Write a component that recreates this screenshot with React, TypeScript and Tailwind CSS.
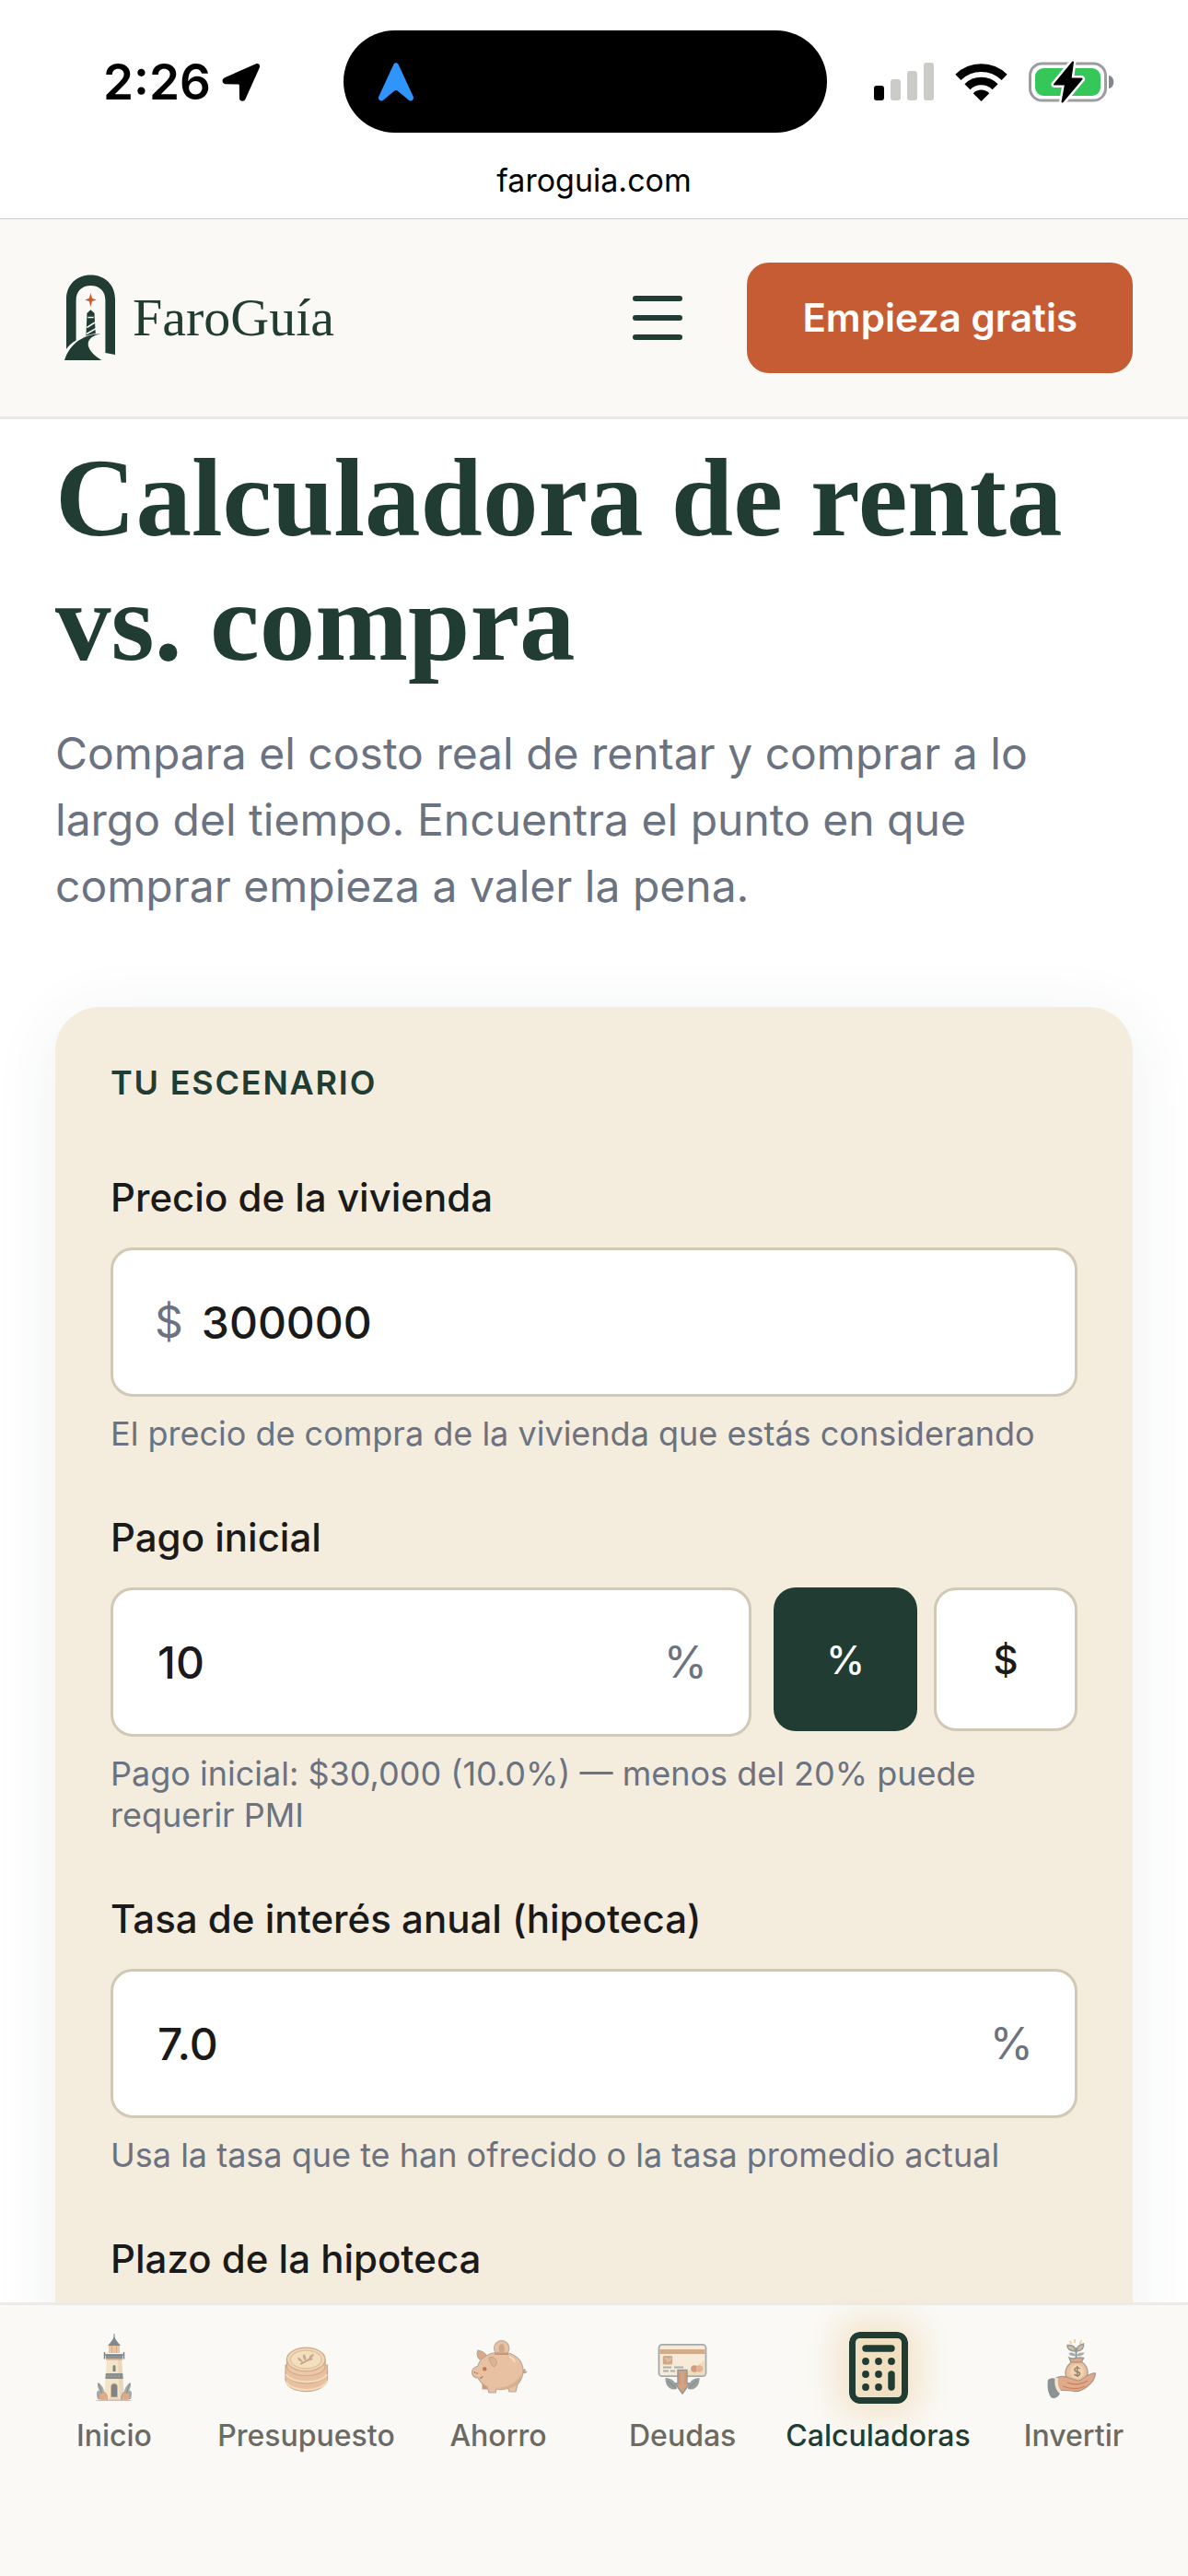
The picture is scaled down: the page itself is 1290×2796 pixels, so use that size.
import React, { useState } from "react";

function StatusBar() {
  return (
    <div className="border-b border-[#cccdc8] bg-white text-black">
      <div className="grid grid-cols-[1fr_525px_1fr] items-center pt-[33px] pr-5">
        <div className="flex items-center gap-3 pl-28">
          <span className="text-[53px] leading-[60px] font-semibold">2:26</span>
          <svg className="h-[42px] w-[42px]" viewBox="0 0 42 42" aria-hidden="true">
            <path
              d="M37 1.2 3 16.2C-0.6 17.8 0 23 3.6 23.2L17.6 23.6C18.4 23.6 18.8 24 18.8 24.8L19 38.6C19.1 42.4 24 43 25.5 39.6L40.8 5.4C42 2.6 39.6 0 37 1.2Z"
              fill="#000"
            />
          </svg>
        </div>
        <div className="flex h-[111px] items-center rounded-full bg-black pl-[38px]">
          <svg className="h-[42px] w-[38px]" viewBox="0 0 38 42" aria-hidden="true">
            <path
              d="M16.4 2C17.4 -0.2 20.6 -0.2 21.6 2L37.6 36.6C39 40 35.8 43 32.6 40.6L20.6 30.6C19.6 29.8 18.4 29.8 17.4 30.6L5.4 40.6C2.2 43 -1 40 0.4 36.6Z"
              fill="#2f95fd"
            />
          </svg>
        </div>
        <div className="flex items-center gap-[23px] pl-[51px]">
          <svg className="h-[42px] w-[65px]" viewBox="0 0 65 42" aria-hidden="true">
            <rect x="0" y="25" width="11" height="16" rx="3" fill="#000" />
            <rect x="18" y="18" width="11" height="23" rx="3" fill="#cbcbc7" />
            <rect x="36" y="9" width="11" height="32" rx="3" fill="#cbcbc7" />
            <rect x="54" y="0" width="11" height="41" rx="3" fill="#cbcbc7" />
          </svg>
          <svg className="h-[42px] w-[57px]" viewBox="0 0 57 42" aria-hidden="true">
            <path d="M28.5 42 19.7 33.2C24.5 28.4 32.5 28.4 37.3 33.2Z" fill="#000" />
            <path d="M13.4 26.2A21.6 21.6 0 0 1 43.6 26.2" fill="none" stroke="#000" strokeWidth="8.6" />
            <path d="M3.4 15.8A36 36 0 0 1 53.6 15.8" fill="none" stroke="#000" strokeWidth="8.6" />
          </svg>
          <svg className="h-[46px] w-[93px]" viewBox="0 0 93 46" aria-hidden="true">
            <rect x="1.5" y="3" width="82" height="40" rx="13" fill="none" stroke="#9d9d9d" strokeWidth="3" />
            <rect x="7" y="8" width="71" height="30" rx="9" fill="#35c759" />
            <path d="M87 16c7 1 7 13 0 14z" fill="#83868c" />
            <path d="M48 1 28 25.6h12L36.5 45 57.6 19.6H45.5z" fill="#000" stroke="#fff" strokeWidth="7" strokeLinejoin="round" paintOrder="stroke" />
            <path d="M48 1.5 28 25.6h12L36.5 44.5 57.6 19.6H45.5z" fill="#000" stroke="#000" strokeWidth="2" strokeLinejoin="round" />
          </svg>
        </div>
      </div>
      <p className="pt-7 pb-[17px] text-center text-[34px] leading-[48px]">faroguia.com</p>
    </div>
  );
}

function LogoMark() {
  return (
    <svg className="h-[94px] w-[56px]" viewBox="0 0 56 94" aria-hidden="true">
      <path
        d="M2 81V27C2 11 13 0.4 28.5 0.4S55 11 55 27V87L44.4 85V28C44.4 18 38 12 28.5 12S12.6 18 12.6 28V71.5C8 74 4 77.5 2 81Z"
        fill="#203c33"
      />
      <path d="M28.4 20 30 25.7 34.6 27.4 30 29 28.4 35 26.8 29 22.2 27.4 26.8 25.7Z" fill="#c75c33" />
      <path d="M24.4 45.5V42L28.4 38.3 32.6 42V45.5L33.8 64C30 64.4 27 65.2 23.4 66.6Z" fill="#203c33" />
      <path d="M25.4 46.5H31.6M24.4 57.5 33 52M24 64.5 34 58.6" stroke="#faf9f5" strokeWidth="1.5" />
      <path d="M0 93C6 75 20 65 39.6 64.3C21 68 21 81 40.4 93Z" fill="#203c33" />
    </svg>
  );
}

function Header() {
  return (
    <header className="flex items-center justify-between border-b-[3px] border-[#ebe7e2] bg-[#faf9f5] px-[60px] py-[47px]">
      <a href="#inicio" className="flex items-center gap-[18px] pl-[10px] text-[#203c33]">
        <LogoMark />
        <span className="font-['Liberation_Serif',serif] text-[58px] leading-[72px]">FaroGuía</span>
      </a>
      <div className="flex items-center gap-[58px]">
        <button type="button" aria-label="Menú" className="p-3">
          <svg className="h-[54px] w-[54px]" viewBox="0 0 54 54" aria-hidden="true">
            <path d="M3 6H51M3 27H51M3 48H51" stroke="#203c33" strokeWidth="6" strokeLinecap="round" />
          </svg>
        </button>
        <a
          href="#registro"
          className="rounded-3xl bg-[#c65c34] px-[60px] py-[30px] text-[42px] leading-[60px] font-semibold text-white"
        >
          Empieza gratis
        </a>
      </div>
    </header>
  );
}

const boxClass = "rounded-3xl border-[3px] border-[#d1c8b6] bg-white";

function Field(props: {
  id: string;
  label: string;
  defaultValue: string;
  prefix?: string;
  suffix?: string;
  hint: string;
  children?: React.ReactNode;
}) {
  const { id, label, defaultValue, prefix, suffix, hint, children } = props;
  return (
    <div>
      <label htmlFor={id} className="mb-6 block text-[42px] leading-[60px] font-medium">
        {label}
      </label>
      <div className="flex items-start gap-6">
        <div
          className={`${boxClass} ${prefix ? "pl-[45px]" : "pl-12"} flex h-[162px] min-w-0 flex-1 items-center gap-5 pr-[45px] text-[48px]`}
        >
          {prefix && <span className="text-[#6b7280]">{prefix}</span>}
          <input
            id={id}
            inputMode="decimal"
            defaultValue={defaultValue}
            className="h-full min-w-0 flex-1 bg-transparent font-medium outline-none"
          />
          {suffix && <span className="text-[#6b7280]">{suffix}</span>}
        </div>
        {children}
      </div>
      <p className="mt-[18px] text-[36px] leading-[45px] text-[#6b7280]">{hint}</p>
    </div>
  );
}

function UnitToggle() {
  const [unit, setUnit] = useState("%");
  return (
    <div className="flex gap-[18px]">
      {["%", "$"].map((u) => (
        <button
          key={u}
          type="button"
          aria-pressed={unit === u}
          onClick={() => setUnit(u)}
          className={
            unit === u
              ? "h-[156px] w-[156px] rounded-3xl bg-[#203c33] text-[42px] font-medium text-white"
              : "h-[156px] w-[156px] rounded-3xl border-[3px] border-[#d1c8b6] bg-white text-[42px] font-medium"
          }
        >
          {u}
        </button>
      ))}
    </div>
  );
}

function LighthouseIcon() {
  return (
    <svg className="h-[84px] w-[84px]" viewBox="0 0 84 84" aria-hidden="true">
      <path d="M42 5V12" stroke="#a3a8a8" strokeWidth="1.5" />
      <path d="M35 18C38 15 40 12 42 8C44 12 46 15 49 18Z" fill="#80898c" />
      <path d="M36 18H48V26H36Z" fill="#ecc6a0" />
      <path d="M39.5 18V26M44.5 18V26" stroke="#d9a98a" strokeWidth="1" />
      <path d="M34 32H50L53 78H31Z" fill="#f3e5c9" />
      <path d="M46 32H50L53 78H48Z" fill="#ead6b8" />
      <path d="M33 27.500H51V32.500H33Z" fill="#8b9294" />
      <path d="M31.500 25V32.500M52.500 25V32.500M31.500 28H52.500" stroke="#7a8488" strokeWidth="1.500" />
      <path d="M33 33H51" stroke="#dda587" strokeWidth="1.200" />
      <path d="M40.500 46V41A1.500 2 0 0 1 43.500 41V46Z" fill="#7d8685" />
      <path d="M32.800 48H51.200L51.700 54H32.400Z" fill="#88908f" />
      <path d="M34 51H50" stroke="#c69c88" strokeWidth="1" strokeDasharray="2 2" />
      <path d="M38.500 74V63A3.500 4 0 0 1 45.500 63V74Z" fill="#7b858a" stroke="#d8b08c" strokeWidth="1" />
      <path d="M37 74H47V78H37Z" fill="#efd9be" />
      <path d="M24 76C22 70 23 66 26 67C23 62 24 58 25 58C29 61 31 65 31 68C34 69 35 73 35 77Z" fill="#a5aaa5" />
      <path d="M60 76C62 70 61 66 58 67C61 62 60 58 59 58C55 61 53 65 53 68C50 69 49 73 49 77Z" fill="#a5aaa5" />
      <path d="M25 59 30 74M59 59 54 74" stroke="#858e8b" strokeWidth="1" />
      <circle cx="30.500" cy="73.500" r="4.500" fill="#e3a884" />
      <circle cx="54.500" cy="73.500" r="4" fill="#e3a884" />
      <path d="M21 78C27 75.500 31 77 35 76.500H49C54 76 58 76 62 78Z" fill="#d9bb9a" />
    </svg>
  );
}

function CoinsIcon() {
  return (
    <svg className="h-[84px] w-[84px]" viewBox="0 0 84 84" aria-hidden="true">
      <g stroke="#cda98b" strokeWidth="1.200">
        <path d="M20 47V55C22 72 63 72 65.600 54V46Z" fill="#e9c0a0" />
        <path d="M20.500 57C26 69 60 69 65.500 56" fill="none" stroke="#f1dcbb" strokeWidth="2" />
        <path d="M20 39V47C24 63 62 63 65.500 47V39Z" fill="#e9c0a0" />
        <path d="M20.500 49C27 60 59 60 65 49" fill="none" stroke="#f1dcbb" strokeWidth="2" />
        <path d="M21.500 33V41C24 54 61 54 63.200 41V33Z" fill="#ecc8a8" />
        <ellipse cx="42.300" cy="33" rx="20.900" ry="12.800" fill="#f0d6b3" />
        <ellipse cx="42.300" cy="33" rx="16.800" ry="9.800" fill="#f2dfc0" stroke="#e2bd98" />
      </g>
      <path d="M36 38C41 36 46 33 49 29" stroke="#c3a184" strokeWidth="1.500" fill="none" />
      <path d="M38 36C35 35 33 33 33 31C36 31 38 33 39 36M41 34C39 32 38 29 40 27C42 29 43 31 42 34M43 34C46 35 49 34 50 32C47 31 45 32 43 34M46 31C46 28 49 27 51 27C51 29 49 31 46 31" fill="#c9a88b" />
    </svg>
  );
}

function PiggyIcon() {
  return (
    <svg className="h-[84px] w-[84px]" viewBox="0 0 84 84" aria-hidden="true">
      <path d="M67 47C71 49 72 43 70 44C68 45 69 50 73 46" fill="none" stroke="#b2a79c" strokeWidth="1.500" />
      <circle cx="45.700" cy="20.800" r="8.200" fill="#e9c1a5" stroke="#b9ada0" strokeWidth="1.200" />
      <ellipse cx="45.700" cy="21" rx="3.200" ry="5" fill="#cfa98c" />
      <g stroke="#b9a797" strokeWidth="1.100" strokeLinejoin="round">
        <path d="M25 57V65H31L34 60Z" fill="#cf9376" />
        <path d="M49 62 54 66 60 59Z" fill="#cf9376" />
        <path d="M22 33C18 30 19 25 20 23C25 24 28 26 30 30Z" fill="#d9a98b" />
        <path
          d="M26 31C32 26 38 25 45 25C60 25 69 34 69 45C69 53 66 57 63 60L61 68H54L53 64C48 66 44 66 40 65L39 69H32L30 63C25 60 22 57 20 53C16 53 13 50 13.500 46C14 42 17 41 20 40C21 36 23 33 26 31Z"
          fill="#e8c0a2"
        />
      </g>
      <path d="M38 27H53" stroke="#c98f72" strokeWidth="1.800" />
      <path d="M32 31C37 29 41 33 40 38C39 42 35 41 34 37C33 35 32 34 32 31Z" fill="#dbb396" stroke="#caa083" strokeWidth="1" />
      <path d="M54 30C57 31 59 33 60 36" fill="none" stroke="#f3dfbd" strokeWidth="2" />
      <path d="M34 63C46 66 61 61 67 49C67 58 60 65 48 65Z" fill="#d8b08e" />
      <circle cx="27.200" cy="43.200" r="2.200" fill="#ca7354" />
      <path d="M16.500 46V48M19 47V49M22 53C24 53.500 25 52 25 51" stroke="#c5775b" strokeWidth="1.300" fill="none" />
    </svg>
  );
}

function DebtIcon() {
  return (
    <svg className="h-[84px] w-[84px]" viewBox="0 0 84 84" aria-hidden="true">
      <rect x="16.500" y="16.800" width="51" height="34.400" rx="3.500" fill="#f5ebd8" stroke="#a4aaab" strokeWidth="1.800" />
      <path d="M42 50 66 34V50Z" fill="#efdcba" />
      <path d="M17.500 22H66.500V27H17.500Z" fill="#d2ab88" />
      <rect x="20.800" y="29" width="10.400" height="9.600" rx="1.500" fill="#cfa98a" />
      <path d="M23 32H26V36M29 31V34H27" stroke="#eed3b7" strokeWidth="1" fill="none" />
      <path d="M21 41.500H30M33 41.500H43M21 45.500H27M29 45.500H34" stroke="#b0ada8" strokeWidth="1.800" />
      <circle cx="55" cy="43" r="3.800" fill="#d29b7b" />
      <circle cx="60.500" cy="43" r="3.800" fill="#e5b394" />
      <path d="M23.500 53C31 53 36 58 36 65C28 67 23 61 23.500 53ZM60.500 53C53 53 48 58 48 65C56 67 61 61 60.500 53Z" fill="#98a09f" />
      <path d="M26 56 35 64M58 56 49 64" stroke="#7f8988" strokeWidth="1" />
      <path d="M37 44.500H47V59H50L42 70 34 59H37Z" fill="#d3a282" stroke="#8f9698" strokeWidth="1.400" />
      <path d="M39 47V60M45 47V60" stroke="#cc8d6d" strokeWidth="1" />
    </svg>
  );
}

function CalculatorIcon() {
  return (
    <span className="flex h-[84px] w-[84px] items-center justify-center">
      <svg
        className="h-[78px] w-[64px] rounded-xl bg-[#f1dfc2] shadow-[0_0_36px_14px_#f3e4cb]"
        viewBox="0 0 64 78"
        aria-hidden="true"
      >
        <rect x="3.500" y="3.500" width="57" height="71" rx="8" fill="none" stroke="#203c33" strokeWidth="7" />
        <path d="M18 18H46M46 46V60" stroke="#203c33" strokeWidth="7.400" strokeLinecap="round" />
        <g fill="#203c33">
          <circle cx="18" cy="32" r="3.900" />
          <circle cx="32" cy="32" r="3.900" />
          <circle cx="46" cy="32" r="3.900" />
          <circle cx="18" cy="46" r="3.900" />
          <circle cx="32" cy="46" r="3.900" />
          <circle cx="18" cy="60" r="3.900" />
          <circle cx="32" cy="60" r="3.900" />
        </g>
      </svg>
    </span>
  );
}

function InvestIcon() {
  return (
    <svg className="h-[84px] w-[84px]" viewBox="0 0 84 84" aria-hidden="true">
      <path d="M37.500 13 39.500 16M43 11V15M50.500 12 48.500 16" stroke="#edc99c" strokeWidth="1.600" />
      <path d="M44.500 32V20" stroke="#8f9896" strokeWidth="2" />
      <path d="M43.500 24C38 24 34.500 21 35 17.500C40 17 44 19 43.500 24ZM45.500 24C50 24 53.500 20 52.500 16C48 17 45 20 45.500 24Z" fill="#d8b99a" stroke="#959c9a" strokeWidth="1.500" />
      <path d="M44 29C40 30 37 28 36.500 26C40 24.500 43 26 44 29ZM45 29C49 30 53 28 53.500 25.500C49 25 46 26 45 29Z" fill="#a4aba8" />
      <path d="M37 31C42 34 47 29 52.500 31.500L50 36H39Z" fill="#dca98a" stroke="#969793" strokeWidth="1.400" />
      <path d="M39 36H51C55 39 57 43 57 47C57 54 53 57 45 57C37 57 33 53 33 47C33 42 36 39 39 36Z" fill="#e9c3a0" stroke="#b19b8b" strokeWidth="1.400" />
      <circle cx="45.500" cy="46" r="7.500" fill="#f0d3b0" />
      <path d="M48.500 43C46 41 42.500 42 43 44.500C43.500 47 48.500 45.500 48.500 48.500C48.500 51 44 51 42.500 49M45.700 40V52" stroke="#948071" strokeWidth="1.400" fill="none" />
      <path d="M21 54C27 50 32 51 37 53L46 56C51 56 54 52 57 50C61 49 63 47 65.500 48C65 54 61 59 57 62C52 66 46 69 40 67L24 66Z" fill="#e0a98a" stroke="#a99488" strokeWidth="1.200" />
      <path d="M35 58C42 61 50 60 57 56M30 62C38 65 46 66 54 62" fill="none" stroke="#cb805f" strokeWidth="1.300" />
      <path d="M21 53C20 60 22 66 26 69L28 67C25 63 24 58 25 53Z" fill="#f3e6d0" />
      <path d="M14 55C17 53 20 53 21.500 54C20.500 61 23 67 27 70C25 74 21 76 17.500 74.500C13.500 69 13 62 14 55Z" fill="#8a9293" />
    </svg>
  );
}

const tabs = [
  { label: "Inicio", href: "#inicio", Icon: LighthouseIcon },
  { label: "Presupuesto", href: "#presupuesto", Icon: CoinsIcon },
  { label: "Ahorro", href: "#ahorro", Icon: PiggyIcon },
  { label: "Deudas", href: "#deudas", Icon: DebtIcon },
  { label: "Calculadoras", href: "#calculadoras", Icon: CalculatorIcon, active: true },
  { label: "Invertir", href: "#invertir", Icon: InvestIcon },
];

function TabBar() {
  return (
    <nav className="relative flex justify-between border-t-[3px] border-[#ecebe7] bg-[#faf9f5] px-9 pt-[26px] pb-[132px]">
      {tabs.map(({ label, href, Icon, active }) => (
        <a
          key={label}
          href={href}
          aria-current={active ? "page" : undefined}
          className={
            active
              ? "flex min-w-[176px] flex-col items-center gap-3 text-[32px] leading-10 font-medium text-[#203c33]"
              : "flex min-w-[176px] flex-col items-center gap-3 text-[32px] leading-10 font-medium text-[#6b6a63]"
          }
        >
          <Icon />
          <span className="relative">{label}</span>
        </a>
      ))}
    </nav>
  );
}

export default function App() {
  return (
    <div className="flex h-screen flex-col overflow-hidden bg-white font-[Inter,sans-serif] text-[#1a1a1a]">
      <StatusBar />
      <Header />
      <main className="min-h-0 flex-1 overflow-y-auto px-[60px] pt-[18px] [scrollbar-width:none]">
        <h1 className="font-['Liberation_Serif',serif] text-[121px] leading-[135px] font-bold text-[#203c33]">
          Calculadora de renta vs. compra
        </h1>
        <p className="mt-[39px] text-[48px] leading-[72px] text-[#6b7280]">
          Compara el costo real de rentar y comprar a lo largo del tiempo. Encuentra el punto en que comprar empieza a
          valer la pena.
        </p>
        <form className="mt-[95px] flex flex-col gap-[60px] rounded-[48px] bg-[#f4ecdd] p-[60px] shadow-[0_12px_72px_rgba(32,60,51,0.08)]">
          <h2 className="mb-3 text-[36px] leading-[45px] font-semibold tracking-wider text-[#203c33]">TU ESCENARIO</h2>
          <Field
            id="precio"
            label="Precio de la vivienda"
            defaultValue="300000"
            prefix="$"
            hint="El precio de compra de la vivienda que estás considerando"
          />
          <Field
            id="pago"
            label="Pago inicial"
            defaultValue="10"
            suffix="%"
            hint="Pago inicial: $30,000 (10.0%) — menos del 20% puede requerir PMI"
          >
            <UnitToggle />
          </Field>
          <Field
            id="tasa"
            label="Tasa de interés anual (hipoteca)"
            defaultValue="7.0"
            suffix="%"
            hint="Usa la tasa que te han ofrecido o la tasa promedio actual"
          />
          <div>
            <label htmlFor="plazo" className="mb-6 block text-[42px] leading-[60px] font-medium">
              Plazo de la hipoteca
            </label>
            <select id="plazo" className={`${boxClass} h-[162px] w-full px-[45px] text-[48px] font-medium`}>
              <option>30 años</option>
              <option>15 años</option>
            </select>
          </div>
        </form>
      </main>
      <TabBar />
    </div>
  );
}
